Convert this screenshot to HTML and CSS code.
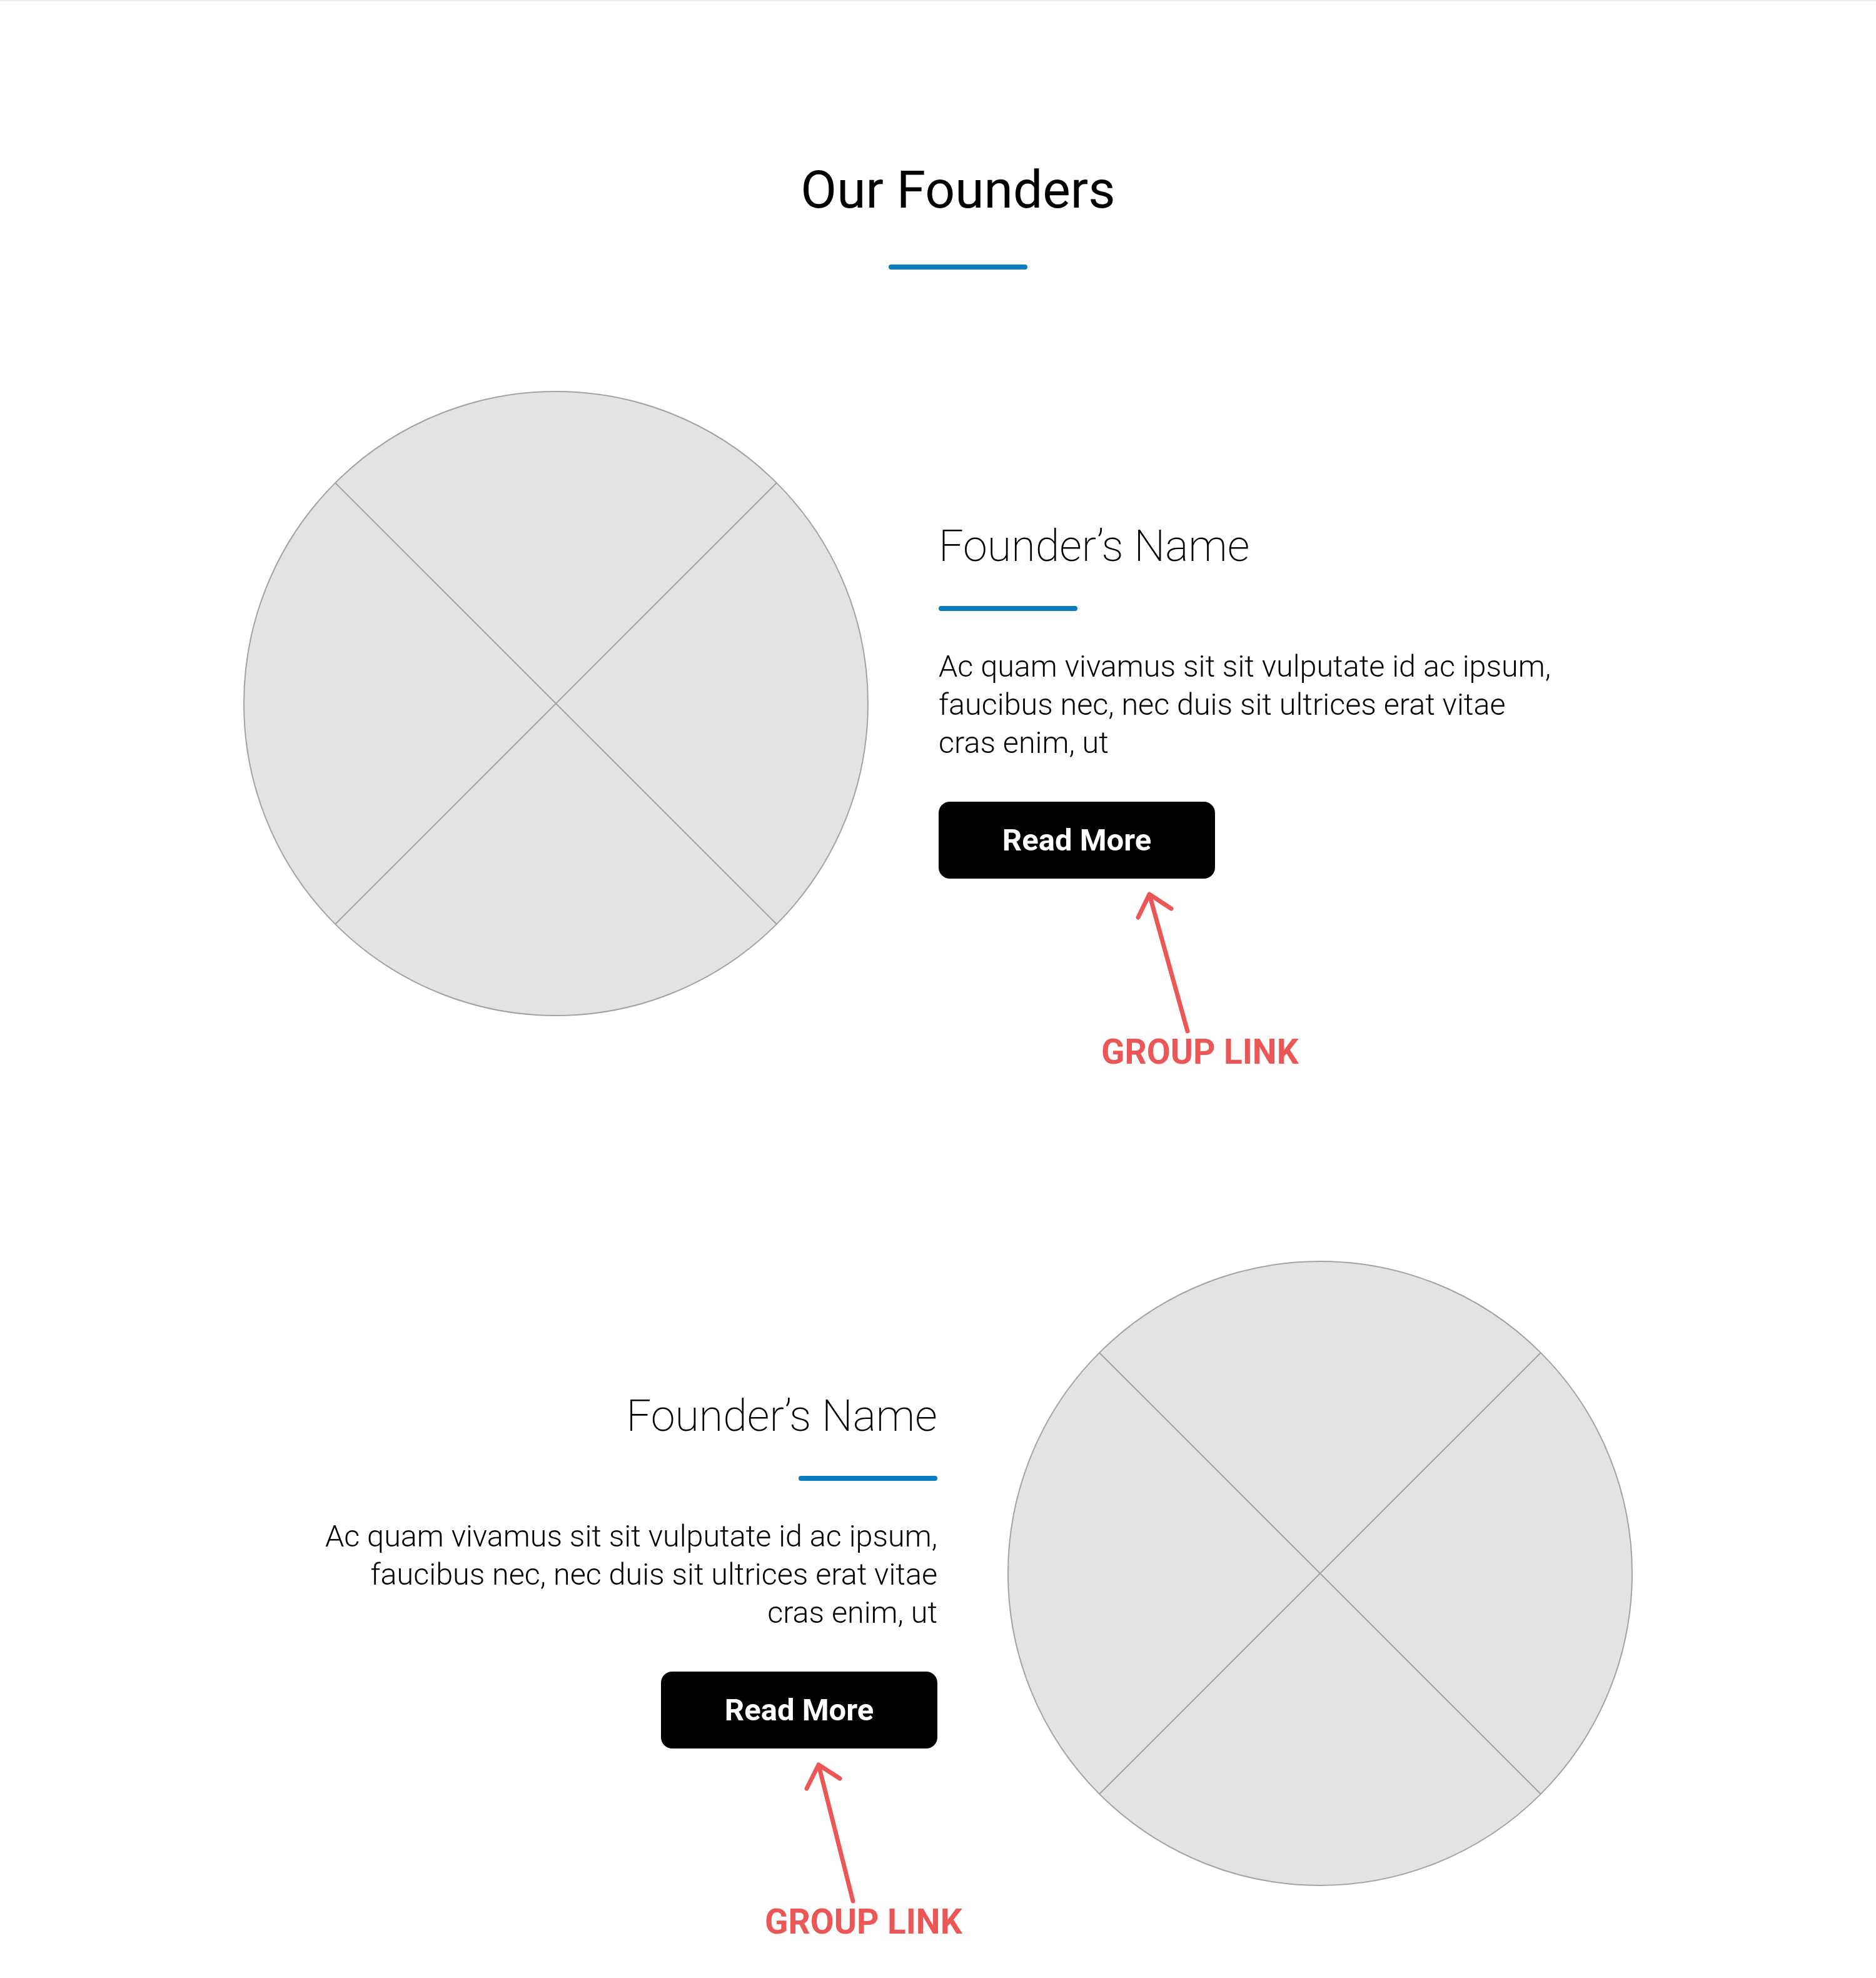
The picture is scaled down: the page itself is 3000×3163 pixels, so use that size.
FILE: index.html
```html
<!DOCTYPE html>
<html lang="en">
<head>
<meta charset="utf-8">
<title>Our Founders</title>
<link rel="stylesheet" href="styles.css">
</head>
<body>
<main class="page">
  <header class="intro">
    <h1 class="intro-title">Our Founders</h1>
    <span class="rule"></span>
  </header>

  <section class="founders">
    <article class="founder">
      <div class="founder-photo">
        <svg class="placeholder" viewBox="0 0 1000 1000" width="1000" height="1000" aria-hidden="true">
          <circle cx="500" cy="500" r="499" fill="#e3e3e3" stroke="#a3a3a3" stroke-width="2"/>
          <line x1="147.2" y1="147.2" x2="852.8" y2="852.8" stroke="#a3a3a3" stroke-width="2"/>
          <line x1="852.8" y1="147.2" x2="147.2" y2="852.8" stroke="#a3a3a3" stroke-width="2"/>
        </svg>
      </div>
      <div class="founder-body">
        <h2 class="founder-name">Founder’s Name</h2>
        <span class="rule"></span>
        <p class="founder-bio">Ac quam vivamus sit sit vulputate id ac ipsum, faucibus nec, nec duis sit ultrices erat vitae cras enim, ut</p>
        <div class="cta">
          <a class="btn" href="#">Read More</a>
          <div class="annot">
            <svg class="annot-arrow" viewBox="0 0 320 250" width="320" height="250" aria-hidden="true">
              <path d="M138 244 L77 25 M59 62 L77 25 L112 48" fill="none" stroke="#eb5757" stroke-width="7" stroke-linecap="round" stroke-linejoin="round"/>
            </svg>
            <span class="annot-label">GROUP LINK</span>
          </div>
        </div>
      </div>
    </article>

    <article class="founder founder--reverse">
      <div class="founder-body">
        <h2 class="founder-name">Founder’s Name</h2>
        <span class="rule"></span>
        <p class="founder-bio">Ac quam vivamus sit sit vulputate id ac ipsum, faucibus nec, nec duis sit ultrices erat vitae cras enim, ut</p>
        <div class="cta">
          <a class="btn" href="#">Read More</a>
          <div class="annot annot--alt">
            <svg class="annot-arrow" viewBox="0 0 320 250" width="320" height="250" aria-hidden="true">
              <path d="M141 244 L86 26 M67 64 L86 26 L120 48" fill="none" stroke="#eb5757" stroke-width="7" stroke-linecap="round" stroke-linejoin="round"/>
            </svg>
            <span class="annot-label">GROUP LINK</span>
          </div>
        </div>
      </div>
      <div class="founder-photo">
        <svg class="placeholder" viewBox="0 0 1000 1000" width="1000" height="1000" aria-hidden="true">
          <circle cx="500" cy="500" r="499" fill="#e3e3e3" stroke="#a3a3a3" stroke-width="2"/>
          <line x1="147.2" y1="147.2" x2="852.8" y2="852.8" stroke="#a3a3a3" stroke-width="2"/>
          <line x1="852.8" y1="147.2" x2="147.2" y2="852.8" stroke="#a3a3a3" stroke-width="2"/>
        </svg>
      </div>
    </article>
  </section>
</main>
</body>
</html>
```

FILE: styles.css
```css
html,
body {
  margin: 0;
  padding: 0;
  background: #ffffff;
}

body {
  font-family: Roboto, "Liberation Sans", Arial, sans-serif;
  color: #000000;
}

.page {
  border-top: 2px solid #ededed;
  padding: 252px 0 148px;
}

.intro {
  display: flex;
  flex-direction: column;
  align-items: center;
  padding-left: 64px;
}

.intro-title {
  margin: 0;
  font-size: 84px;
  font-weight: 400;
  line-height: 1.2;
}

.rule {
  display: block;
  width: 222px;
  height: 8px;
  border-radius: 4px;
  background: #0a7bbf;
}

.intro .rule {
  margin-top: 68px;
}

.founders {
  width: 2222px;
  margin: 194px auto 0;
  display: flex;
  flex-direction: column;
  gap: 391px;
}

.founder {
  display: grid;
  grid-template-columns: 1000px 1110px;
  column-gap: 112px;
  align-items: center;
}

.founder--reverse {
  grid-template-columns: 1110px 1000px;
}

.founder-photo {
  width: 1000px;
  height: 1000px;
}

.placeholder {
  display: block;
}

.founder-body {
  display: flex;
  flex-direction: column;
  align-items: flex-start;
  margin-bottom: 13px;
}

.founder--reverse .founder-body {
  align-items: flex-end;
  text-align: right;
}

.founder-name {
  margin: 0;
  font-size: 70px;
  font-weight: 200;
  line-height: 84px;
}

.founder-body .rule {
  margin-top: 54px;
}

.founder-bio {
  margin: 58px 0 0;
  width: 992px;
  font-size: 48.5px;
  line-height: 61px;
  font-weight: 300;
}

.cta {
  position: relative;
  margin-top: 64px;
}

.btn {
  display: flex;
  align-items: center;
  justify-content: center;
  width: 442px;
  height: 123px;
  border-radius: 18px;
  background: #000000;
  color: #ffffff;
  font-size: 49px;
  font-weight: 700;
  text-decoration: none;
}

.annot {
  position: absolute;
  top: 100%;
  left: 260px;
  width: 320px;
  text-align: left;
}

.annot--alt {
  left: 166px;
}

.annot-arrow {
  display: block;
}

.annot-label {
  display: block;
  font-family: Roboto, "Liberation Sans", Arial, sans-serif;
  font-size: 55px;
  font-weight: 700;
  line-height: 55px;
  color: #eb5757;
  white-space: nowrap;
}
```
